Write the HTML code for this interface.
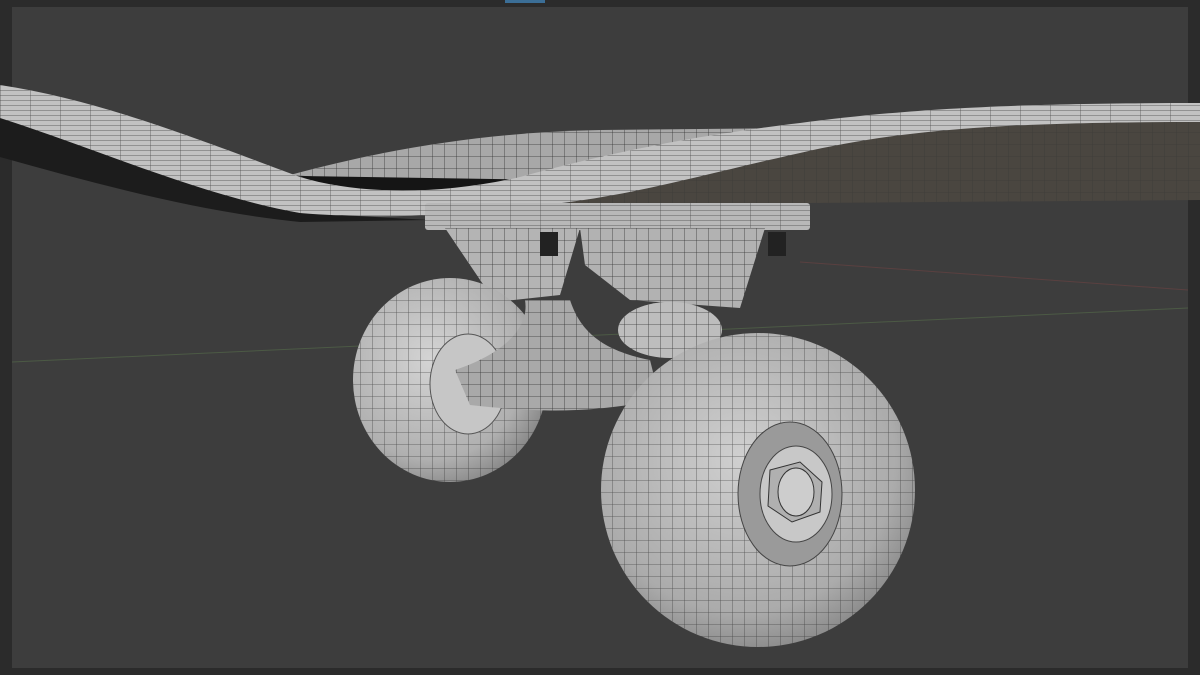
<!DOCTYPE html>
<html><head><style>
html,body{margin:0;padding:0;background:#2b2b2b;width:1200px;height:675px;overflow:hidden}
svg{display:block}
</style></head><body>
<svg width="1200" height="675" viewBox="0 0 1200 675" xmlns="http://www.w3.org/2000/svg">
<defs>
<pattern id="g" width="12" height="12" patternUnits="userSpaceOnUse"><path d="M0 0H12M0 0V12" stroke="#333" stroke-width="0.8" fill="none"/></pattern>
<pattern id="h" width="30" height="5" patternUnits="userSpaceOnUse"><path d="M0 0H30M0 0V5" stroke="#444" stroke-width="0.7" fill="none"/></pattern>
<radialGradient id="w1" cx="0.4" cy="0.4" r="0.7"><stop offset="0" stop-color="#d4d4d4"/><stop offset="0.7" stop-color="#b0b0b0"/><stop offset="1" stop-color="#7a7a7a"/></radialGradient>
<radialGradient id="w2" cx="0.45" cy="0.4" r="0.7"><stop offset="0" stop-color="#d0d0d0"/><stop offset="0.7" stop-color="#ababab"/><stop offset="1" stop-color="#777"/></radialGradient>
</defs>
<rect x="12" y="7" width="1176" height="661" fill="#3d3d3d"/>
<rect x="505" y="0" width="40" height="3" fill="#3b6e96"/>
<line x1="12" y1="362" x2="1188" y2="308" stroke="#4c5a45" stroke-width="1"/>
<line x1="800" y1="262" x2="1188" y2="290" stroke="#5a4040" stroke-width="1"/>
<!-- deck underside left -->
<path d="M0 118 C100 150 200 195 300 213 L430 220 L300 222 C200 212 100 185 0 157 Z" fill="#1c1c1c"/>
<!-- dished middle -->
<path d="M290 175 C400 145 500 132 600 130 L800 128 L700 175 L520 190Z" fill="#a8a8a8"/>
<path d="M290 175 C400 145 500 132 600 130 L800 128 L700 175 L520 190Z" fill="url(#g)"/>
<path d="M300 176 L560 180 L520 207 L380 212Z" fill="#151515"/>
<!-- deck right underside -->
<path d="M560 205 C650 180 720 165 800 150 C900 130 1000 120 1200 120 L1200 200 L560 205Z" fill="#4a4640"/>
<path d="M560 205 C650 180 720 165 800 150 C900 130 1000 120 1200 120 L1200 200 L560 205Z" fill="url(#g)" opacity="0.6"/>
<!-- deck edge strip -->
<path d="M0 85 C100 100 200 140 300 177 C360 195 440 195 520 177 C620 150 700 135 800 123 C900 110 1000 103 1200 103 L1200 122 C1000 122 900 130 800 153 C700 175 620 200 520 207 C440 218 360 218 300 213 C200 195 100 150 0 118 Z" fill="#c2c2c2"/>
<path d="M0 85 C100 100 200 140 300 177 C360 195 440 195 520 177 C620 150 700 135 800 123 C900 110 1000 103 1200 103 L1200 122 C1000 122 900 130 800 153 C700 175 620 200 520 207 C440 218 360 218 300 213 C200 195 100 150 0 118 Z" fill="url(#h)"/>
<!-- baseplate -->
<rect x="425" y="203" width="385" height="27" rx="3" fill="#b8b8b8"/>
<rect x="425" y="203" width="385" height="27" fill="url(#h)"/>
<!-- hanger bases -->
<path d="M445 228 L580 228 L560 295 L495 302 Z" fill="#b4b4b4"/>
<path d="M445 228 L580 228 L560 295 L495 302 Z" fill="url(#g)"/>
<path d="M580 228 L765 228 L740 308 L630 300 L585 265Z" fill="#b2b2b2"/>
<path d="M580 228 L765 228 L740 308 L630 300 L585 265Z" fill="url(#g)"/>
<rect x="540" y="232" width="18" height="24" fill="#222"/>
<rect x="768" y="232" width="18" height="24" fill="#222"/>
<!-- bushing -->
<ellipse cx="670" cy="330" rx="52" ry="28" fill="#bdbdbd"/>
<ellipse cx="670" cy="330" rx="52" ry="28" fill="url(#g)"/>
<!-- left wheel -->
<ellipse cx="450" cy="380" rx="97" ry="102" fill="url(#w1)"/>
<ellipse cx="450" cy="380" rx="97" ry="102" fill="url(#g)" opacity="0.8"/>
<ellipse cx="468" cy="384" rx="38" ry="50" fill="#c6c6c6" stroke="#555"/>
<!-- axle/hanger -->
<path d="M455 370 C500 355 530 330 525 300 L570 300 C580 330 600 350 650 360 L660 400 C600 410 560 415 470 405 Z" fill="#a9a9a9"/>
<path d="M455 370 C500 355 530 330 525 300 L570 300 C580 330 600 350 650 360 L660 400 C600 410 560 415 470 405 Z" fill="url(#g)"/>
<!-- right wheel -->
<ellipse cx="758" cy="490" rx="157" ry="157" fill="url(#w2)"/>
<ellipse cx="758" cy="490" rx="157" ry="157" fill="url(#g)" opacity="0.8"/>
<ellipse cx="790" cy="494" rx="52" ry="72" fill="#9a9a9a" stroke="#444"/>
<ellipse cx="796" cy="494" rx="36" ry="48" fill="#c8c8c8" stroke="#444"/>
<polygon points="770,470 800,462 822,482 820,512 792,522 768,506" fill="#b0b0b0" stroke="#333"/>
<ellipse cx="796" cy="492" rx="18" ry="24" fill="#cdcdcd" stroke="#333"/>
</svg>
</body></html>
